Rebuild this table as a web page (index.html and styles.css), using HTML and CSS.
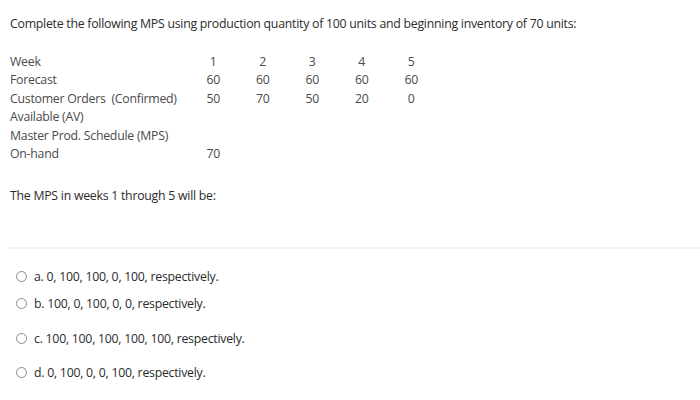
FILE: index.html
```html
<!DOCTYPE html>
<html>
<head>
<meta charset="utf-8">
<link rel="stylesheet" href="styles.css">
</head>
<body>
<div class="page">
  <p class="prompt">Complete the following MPS using production quantity of 100 units and beginning inventory of 70 units:</p>
  <div class="mps">
    <span class="lbl">Week</span><span class="num">1</span><span class="num">2</span><span class="num">3</span><span class="num">4</span><span class="num">5</span>
    <span class="lbl">Forecast</span><span class="num">60</span><span class="num">60</span><span class="num">60</span><span class="num">60</span><span class="num">60</span>
    <span class="lbl">Customer Orders&nbsp; (Confirmed)</span><span class="num">50</span><span class="num">70</span><span class="num">50</span><span class="num">20</span><span class="num">0</span>
    <span class="lbl full">Available (AV)</span>
    <span class="lbl full">Master Prod. Schedule (MPS)</span>
    <span class="lbl">On-hand</span><span class="num">70</span><span class="num"></span><span class="num"></span><span class="num"></span><span class="num"></span>
  </div>
  <p class="question">The MPS in weeks 1 through 5 will be:</p>
  <div class="sep"></div>
  <ul class="options">
    <li class="opt"><span class="radio"></span><span>a. 0, 100, 100, 0, 100, respectively.</span></li>
    <li class="opt"><span class="radio"></span><span>b. 100, 0, 100, 0, 0, respectively.</span></li>
    <li class="opt opt-wide"><span class="radio"></span><span>c. 100, 100, 100, 100, 100, respectively.</span></li>
    <li class="opt opt-wide2"><span class="radio"></span><span>d. 0, 100, 0, 0, 100, respectively.</span></li>
  </ul>
</div>
</body>
</html>
```
FILE: styles.css
```css
html, body {
  margin: 0;
  padding: 0;
  background: #fff;
}
.page {
  font-family: "Open Sans", "Noto Sans", sans-serif;
  font-size: 12.3px;
  letter-spacing: -0.25px;
  color: #333;
  padding: 15px 0 0 10px;
}
.prompt {
  margin: 0;
  line-height: 18px;
  color: #2b2b2b;
}
.mps {
  margin-top: 19px;
  display: grid;
  grid-template-columns: 178.5px repeat(5, 49.5px);
  grid-auto-rows: 18.5px;
  align-items: center;
  color: #4a4a4a;
}
.lbl.full {
  grid-column: 1 / -1;
}
.num {
  text-align: center;
}
.question {
  margin: 24px 0 0;
  line-height: 18px;
  color: #2b2b2b;
}
.sep {
  margin-top: 42px;
  height: 2px;
  background: #f1f1f1;
}
.options {
  list-style: none;
  margin: 18px 0 0;
  padding: 0 0 0 6px;
  color: #2b2b2b;
}
.opt {
  display: flex;
  align-items: center;
  gap: 7px;
  height: 18px;
  margin-bottom: 9px;
}
.opt-wide {
  margin-top: 17px;
}
.opt-wide2 {
  margin-top: 16px;
}
.radio {
  width: 9px;
  height: 9px;
  border: 1px solid #8a8a8a;
  border-radius: 50%;
  flex: none;
}
```
